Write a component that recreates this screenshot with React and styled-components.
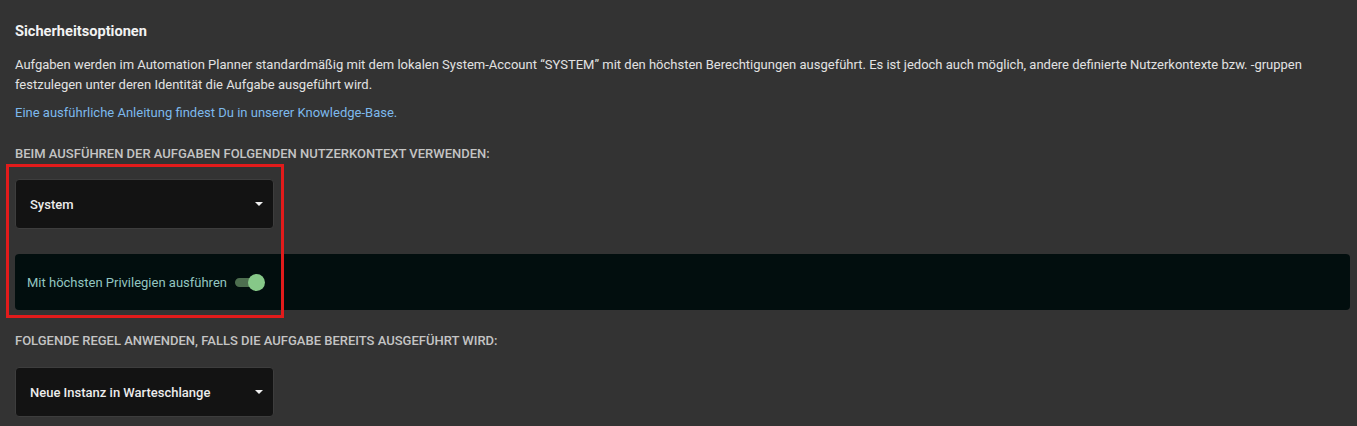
import React from "react";
import styled, { createGlobalStyle } from "styled-components";

const Global = createGlobalStyle`
  html, body {
    margin: 0;
    padding: 0;
    background: #333333;
    font-family: Roboto, "Liberation Sans", sans-serif;
  }
`;

const Page = styled.div`
  padding: 20px 7px 0 15px;
  color: #e0e0e0;
`;

const Title = styled.h2`
  margin: 0;
  font-size: 14.6px;
  line-height: 22px;
  font-weight: 700;
  color: #f2f2f2;
`;

const Para = styled.p`
  margin: 13px 0 0;
  font-size: 13px;
  line-height: 20px;
  color: #e2e2e2;
`;

const NoWrap = styled.span`
  white-space: nowrap;
`;

const Link = styled.a`
  display: block;
  margin-top: 8px;
  font-size: 13px;
  line-height: 20px;
  color: #7db9ec;
  text-decoration: none;
`;

const Label = styled.div`
  margin-top: ${(p) => p.top || 21}px;
  font-size: 13px;
  line-height: 20px;
  font-weight: 500;
  text-transform: uppercase;
  color: #c4c4c4;
`;

const Group = styled.div`
  position: relative;
  margin-top: 15px;
`;

const Highlight = styled.div`
  position: absolute;
  left: -9px;
  top: -15px;
  width: 272px;
  height: 148px;
  border: 3px solid #e21b1b;
  pointer-events: none;
`;

const Select = styled.div`
  box-sizing: border-box;
  width: 259px;
  height: 50px;
  display: flex;
  align-items: center;
  justify-content: space-between;
  padding: 0 8px 0 14px;
  background: #131313;
  border: 1px solid #3d3d3d;
  border-radius: 4px;
  font-size: 13px;
  font-weight: 500;
  color: #ececec;
  margin-top: ${(p) => p.top || 0}px;
`;

const Caret = styled.span`
  width: 0;
  height: 0;
  border-left: 4px solid transparent;
  border-right: 4px solid transparent;
  border-top: 4px solid #f0f0f0;
  margin-right: 2px;
`;

const Panel = styled.div`
  margin-top: 25px;
  height: 56px;
  display: flex;
  align-items: center;
  gap: 8px;
  padding-left: 12px;
  background: #020e0e;
  border-radius: 4px;
  font-size: 13px;
  color: #93c6c0;
`;

const Switch = styled.span`
  position: relative;
  width: 22px;
  height: 9px;
  border-radius: 5px;
  background: #4d6e4f;
`;

const Thumb = styled.span`
  position: absolute;
  right: -8px;
  top: -4px;
  width: 17px;
  height: 17px;
  border-radius: 50%;
  background: #86c888;
`;

export default function App() {
  return (
    <>
      <Global />
      <Page>
        <Title>Sicherheitsoptionen</Title>
        <Para>
          Aufgaben werden im Automation Planner standardmäßig mit dem lokalen System-Account “SYSTEM” mit den höchsten
          Berechtigungen ausgeführt. Es ist jedoch auch möglich, andere definierte Nutzerkontexte bzw.{" "}
          <NoWrap>-gruppen</NoWrap> festzulegen unter deren Identität die Aufgabe ausgeführt wird.
        </Para>
        <Link href="#">Eine ausführliche Anleitung findest Du in unserer Knowledge-Base.</Link>
        <Label top={21}>Beim Ausführen der Aufgaben folgenden Nutzerkontext verwenden:</Label>
        <Group>
          <Select>
            <span>System</span>
            <Caret />
          </Select>
          <Panel>
            <span>Mit höchsten Privilegien ausführen</span>
            <Switch>
              <Thumb />
            </Switch>
          </Panel>
          <Highlight />
        </Group>
        <Label top={21}>Folgende Regel anwenden, falls die Aufgabe bereits ausgeführt wird:</Label>
        <Select top={16}>
          <span>Neue Instanz in Warteschlange</span>
          <Caret />
        </Select>
      </Page>
    </>
  );
}
